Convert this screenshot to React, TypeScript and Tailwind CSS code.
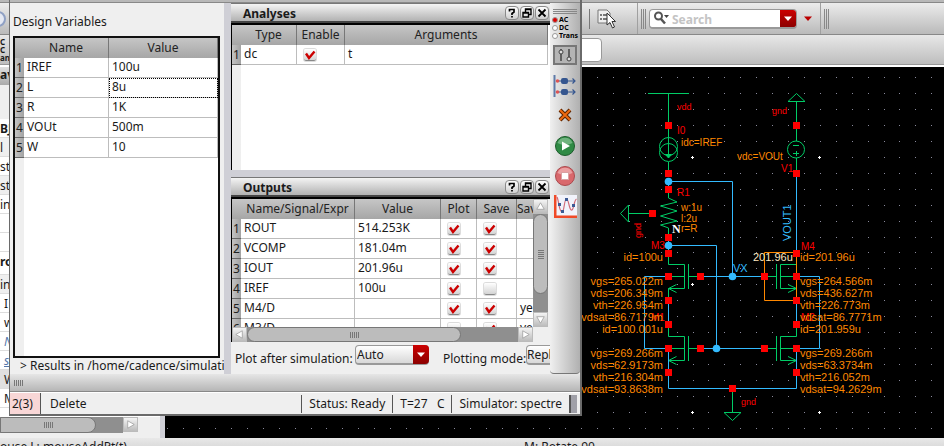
import React from "react";

const UI = "font-['Noto_Sans','Open_Sans',sans-serif]";

function Tick({ on, label }: { on: boolean; label: string }) {
  return (
    <span className="inline-grid h-3 w-3 align-middle">
      <input
        type="checkbox"
        defaultChecked={on}
        aria-label={label}
        className="peer col-start-1 row-start-1 h-3 w-3 appearance-none rounded-xs border-b border-[#888888] bg-linear-to-b from-white to-[#d4d4d4] shadow-[0_0_0_1px_#dcdcdc]"
      />
      <svg viewBox="0 0 12 12" className="pointer-events-none col-start-1 row-start-1 hidden h-3 w-3 peer-checked:block">
        <path d="M2 4.5 L5 9 L10.5 2.5" fill="none" stroke="#cc0000" strokeWidth="2.4" />
      </svg>
    </span>
  );
}

function Grip({ vertical = false }: { vertical?: boolean }) {
  return vertical ? (
    <span className="flex flex-col gap-px">
      {[0, 1, 2, 3, 4].map((i) => (
        <i key={i} className="h-px w-1.5 bg-[#777777]" />
      ))}
    </span>
  ) : (
    <span className="flex gap-px">
      {[0, 1, 2, 3, 4].map((i) => (
        <i key={i} className="h-1.5 w-px bg-[#777777]" />
      ))}
    </span>
  );
}

const headCell =
  "h-[19px] border-r border-[#777777] bg-linear-to-b from-[#c6c6c6] to-[#a6a6a6] p-0 text-center font-normal leading-5 text-[#222222] overflow-hidden whitespace-nowrap";
const rowHead =
  "h-5 border-b border-[#666666] bg-linear-to-r from-[#c4c4c4] to-[#a2a2a2] p-0 text-center font-normal leading-[18px] text-[#222222]";
const cell = "h-5 border-r border-b border-[#bdbdbd] bg-white p-0 pl-[3px] align-top leading-[18px] whitespace-nowrap overflow-hidden";

function DesignVariables() {
  const rows = [
    ["IREF", "100u"],
    ["L", "8u"],
    ["R", "1K"],
    ["VOUt", "500m"],
    ["W", "10"],
  ];
  return (
    <section className="flex w-[214px] flex-none flex-col bg-[#efefef]">
      <h2 className="h-[33px] flex-none pt-[9px] pl-[3px] leading-5">Design Variables</h2>
      <div className="mr-1 ml-[3px] min-h-0 flex-1 border-2 border-[#111111] bg-linear-to-r from-[#efefef] from-[9px] to-white to-[9px]">
        <table className="w-full table-fixed border-separate border-spacing-0">
          <colgroup>
            <col className="w-[9px]" />
            <col className="w-[85px]" />
            <col />
          </colgroup>
          <thead>
            <tr>
              <th className={headCell + " border-r-0"} />
              <th className={headCell}>Name</th>
              <th className={headCell}>Value</th>
            </tr>
          </thead>
          <tbody>
            {rows.map(([n, v], i) => (
              <tr key={n}>
                <th className={rowHead}>{i + 1}</th>
                <td className={cell}>{n}</td>
                <td className={cell + (n === "L" ? " outline-1 -outline-offset-1 outline-dotted outline-black" : "")}>{v}</td>
              </tr>
            ))}
          </tbody>
        </table>
      </div>
      <p className="flex-none overflow-hidden pl-2.5 leading-4 whitespace-nowrap">&gt; Results in /home/cadence/simulation</p>
    </section>
  );
}

function TitleButton({ name, children }: { name: string; children: React.ReactNode }) {
  return (
    <button aria-label={name} className="h-[14px] w-[14px] rounded-sm border border-[#8a8a8a] bg-linear-to-b from-white to-[#cfcfcf]">
      <svg viewBox="0 0 12 12" className="h-3 w-3" fill="none" stroke="#000000">
        {children}
      </svg>
    </button>
  );
}

function PanelTitle({ children }: { children: React.ReactNode }) {
  return (
    <header className="flex h-5 flex-none items-center gap-px border-t border-b-2 border-t-[#777777] border-b-[#444444] bg-linear-to-b from-[#f4f4f4] to-[#b2b2b2] pr-px pl-3">
      <h2 className="flex-1 pt-0.5 font-bold">{children}</h2>
      <TitleButton name="Help">
        <path d="M3.5 4.5 V2.5 H8 V5 L6 6.5 V8 M6 9 V10.5" strokeWidth="1.7" />
      </TitleButton>
      <TitleButton name="Float">
        <path d="M4.5 5 V2 H10 V7.5 H8 M4 2.5 H10.5" strokeWidth="1.4" />
        <path d="M2 5.5 H7.5 V10 H2 Z M2 6 H8" strokeWidth="1.4" />
      </TitleButton>
      <TitleButton name="Close">
        <path d="M2.5 2.5 L9.5 9.5 M9.5 2.5 L2.5 9.5" strokeWidth="1.8" />
      </TitleButton>
    </header>
  );
}

function Analyses() {
  return (
    <section className="flex h-[167px] flex-none flex-col">
      <PanelTitle>Analyses</PanelTitle>
      <div className="flex-1 border-t-2 border-l border-black bg-linear-to-r from-[#efefef] from-[9px] to-white to-[9px] pr-0.5">
        <table className="w-full table-fixed border-separate border-spacing-0">
          <colgroup>
            <col className="w-[9px]" />
            <col className="w-14" />
            <col className="w-12" />
            <col />
          </colgroup>
          <thead>
            <tr>
              <th className={headCell + " border-r-0"} />
              <th className={headCell}>Type</th>
              <th className={headCell}>Enable</th>
              <th className={headCell}>Arguments</th>
            </tr>
          </thead>
          <tbody>
            <tr>
              <th className={rowHead}>1</th>
              <td className={cell}>dc</td>
              <td className={cell + " pl-[7px]"}>
                <Tick on label="Enable dc" />
              </td>
              <td className={cell}>t</td>
            </tr>
          </tbody>
        </table>
      </div>
    </section>
  );
}

function ScrollButton({ dir }: { dir: "up" | "down" | "left" | "right" }) {
  const d = { up: "M3 10 L7 3 L11 10 Z", down: "M3 4 L7 11 L11 4 Z", left: "M10 3 L3 7 L10 11 Z", right: "M4 3 L11 7 L4 11 Z" }[dir];
  return (
    <button aria-label={"Scroll " + dir} className="h-[15px] w-[15px] flex-none border border-[#bbbbbb] bg-linear-to-b from-[#f4f4f4] to-[#bcbcbc]">
      <svg viewBox="0 0 14 14" className="h-[13px] w-[13px]">
        <path d={d} fill="#ffffff" stroke="#999999" strokeWidth="0.8" />
      </svg>
    </button>
  );
}

function Outputs() {
  const rows: [string, string, boolean, boolean, string][] = [
    ["ROUT", "514.253K", true, true, ""],
    ["VCOMP", "181.04m", true, true, ""],
    ["IOUT", "201.96u", true, true, ""],
    ["IREF", "100u", true, false, ""],
    ["M4/D", "", true, true, "yes"],
    ["M3/D", "", false, true, "yes"],
  ];
  return (
    <section className="flex min-h-0 flex-1 flex-col">
      <PanelTitle>Outputs</PanelTitle>
      <div className="flex h-[130px] flex-none border-t-2 border-l border-black pr-0.5">
        <div className="min-w-0 flex-1 overflow-hidden bg-white">
          <table className="w-[360px] table-fixed border-separate border-spacing-0">
            <colgroup>
              <col className="w-[9px]" />
              <col className="w-[114px]" />
              <col className="w-[86px]" />
              <col className="w-9" />
              <col className="w-10" />
              <col />
            </colgroup>
            <thead>
              <tr>
                <th className={headCell + " border-r-0"} />
                <th className={headCell}>Name/Signal/Expr</th>
                <th className={headCell}>Value</th>
                <th className={headCell}>Plot</th>
                <th className={headCell}>Save</th>
                <th className={headCell + " text-left"}>Save Options</th>
              </tr>
            </thead>
            <tbody>
              {rows.map(([n, v, p, s, o], i) => (
                <tr key={n}>
                  <th className={rowHead}>{i + 1}</th>
                  <td className={cell}>{n}</td>
                  <td className={cell}>{v}</td>
                  <td className={cell + " pl-[7px]"}>
                    <Tick on={p} label={"Plot " + n} />
                  </td>
                  <td className={cell + " pl-[7px]"}>
                    <Tick on={s} label={"Save " + n} />
                  </td>
                  <td className={cell}>{o}</td>
                </tr>
              ))}
            </tbody>
          </table>
        </div>
        <div className="flex w-[15px] flex-none flex-col bg-[#8f8f8f]">
          <ScrollButton dir="up" />
          <div className="flex h-20 items-center justify-center rounded-full border border-[#777777] bg-[#bcbcbc]">
            <Grip vertical />
          </div>
          <span className="flex-1" />
          <ScrollButton dir="down" />
        </div>
      </div>
      <div className="flex flex-none border-l border-black pr-[17px]">
        <ScrollButton dir="left" />
        <div className="flex flex-1 bg-[#8f8f8f]">
          <div className="flex h-[15px] w-[214px] items-center justify-center rounded-full border border-[#777777] bg-[#bcbcbc]">
            <Grip />
          </div>
        </div>
        <ScrollButton dir="right" />
      </div>
      <div className="flex items-start overflow-hidden pt-[3px] pl-1 whitespace-nowrap">
        <label htmlFor="plot-after" className="w-[120px] flex-none pt-1 leading-5">
          Plot after simulation:
        </label>
        <span className="grid w-[74px] flex-none">
          <select
            id="plot-after"
            className="col-start-1 row-start-1 h-5 appearance-none rounded-sm border border-b-2 border-[#999999] bg-linear-to-b from-white to-[#d8d8d8] pl-px leading-4"
          >
            <option>Auto</option>
          </select>
          <span className="pointer-events-none col-start-1 row-start-1 flex h-[19px] w-4 items-center justify-center justify-self-end rounded-r-sm bg-linear-to-b from-[#cc0000] to-[#8c0000]">
            <svg viewBox="0 0 8 5" className="h-[5px] w-2">
              <path d="M0 0.5 H8 L4 5 Z" fill="#ffffff" />
            </svg>
          </span>
        </span>
        <label htmlFor="plot-mode" className="ml-3.5 w-[83px] flex-none pt-1 leading-5">
          Plotting mode:
        </label>
        <select
          id="plot-mode"
          className="h-5 w-[74px] flex-none appearance-none rounded-sm border border-b-2 border-[#999999] bg-linear-to-b from-white to-[#d8d8d8] pl-0 leading-4"
        >
          <option>Replace</option>
        </select>
      </div>
    </section>
  );
}

function RadioLine({ on, text }: { on: boolean; text: string }) {
  return (
    <label className="flex h-2 items-center gap-px text-[7px] leading-2 font-bold text-black">
      <input
        type="radio"
        name="kind"
        defaultChecked={on}
        className="h-1.5 w-1.5 flex-none appearance-none rounded-full border border-[#999999] bg-white checked:bg-[#dd0000]"
      />
      {text}
    </label>
  );
}

function SideTools() {
  return (
    <aside className="flex w-[30px] flex-none flex-col items-center rounded-b-sm border-b border-[#777777] bg-linear-to-r from-[#f0f0f0] to-[#b0b0b0] pt-1.5">
      <span className="flex w-6 flex-col gap-px">
        <i className="h-px bg-[#888888]" />
        <i className="h-px bg-[#888888]" />
        <i className="h-px bg-[#888888]" />
      </span>
      <fieldset aria-label="Analysis kind" className="mt-0.5 flex w-[22px] flex-col">
        <RadioLine on text="AC" />
        <RadioLine on={false} text="DC" />
        <RadioLine on={false} text="Trans" />
      </fieldset>
      <button aria-label="Edit variables" className="mt-[5px] h-5 w-6 border-2 border-[#777777] bg-[#b4b4b4]">
        <svg viewBox="0 0 20 16" className="h-4 w-5" fill="none">
          <path d="M6 2 V14 M14 2 V14" stroke="#444444" strokeWidth="1.5" />
          <circle cx="6" cy="5" r="2" fill="#dddddd" stroke="#444444" />
          <circle cx="14" cy="12" r="2" fill="#dddddd" stroke="#444444" />
        </svg>
      </button>
      <button aria-label="Setup outputs" className="mt-[9px]">
        <svg viewBox="0 0 24 24" className="h-6 w-6" fill="none">
          <path d="M1.5 1 V23" stroke="#5f7aa8" strokeWidth="2" />
          <path d="M3 7 H22 M3 18 H22 M19.5 4.5 L22 7 L19.5 9.5 M19.5 15.5 L22 18 L19.5 20.5" stroke="#35568f" strokeWidth="1.2" />
          <circle cx="4.5" cy="7" r="1.8" fill="#dd5555" />
          <circle cx="4.5" cy="18" r="1.8" fill="#dd5555" />
          <rect x="8" y="4" width="7" height="6" rx="2" fill="#35568f" />
          <rect x="8" y="15" width="7" height="6" rx="2" fill="#35568f" />
        </svg>
      </button>
      <button aria-label="Delete" className="mt-2.5">
        <svg viewBox="0 0 14 14" className="h-3.5 w-3.5">
          <path d="M2 2 L12 12 M12 2 L2 12" stroke="#5a2400" strokeWidth="4" />
          <path d="M2 2 L12 12 M12 2 L2 12" stroke="#ee6a10" strokeWidth="2" />
        </svg>
      </button>
      <button aria-label="Run" className="mt-3.5">
        <svg viewBox="0 0 20 20" className="h-5 w-5">
          <circle cx="10" cy="10" r="9.5" fill="#2f8a45" stroke="#1d5c2c" />
          <path d="M2.5 7 A8 8 0 0 1 17.5 7 Q10 11 2.5 7 Z" fill="#6fb37e" />
          <path d="M7 5.5 L15 10 L7 14.5 Z" fill="#ffffff" />
        </svg>
      </button>
      <button aria-label="Stop" className="mt-2.5">
        <svg viewBox="0 0 20 20" className="h-5 w-5">
          <circle cx="10" cy="10" r="9.5" fill="#d9686c" stroke="#aa4a4e" />
          <path d="M2.5 7 A8 8 0 0 1 17.5 7 Q10 11 2.5 7 Z" fill="#eaa0a2" />
          <rect x="6.5" y="6.5" width="7" height="7" fill="#ffffff" stroke="#d9a0a2" />
        </svg>
      </button>
      <button aria-label="Plot" className="mt-[9px]">
        <svg viewBox="0 0 23 23" className="h-[23px] w-[23px]" fill="none">
          <rect width="23" height="23" fill="#f1f3fb" />
          <path d="M1 0 V22 H23" stroke="#f04a28" strokeWidth="3" />
          <path d="M3 2 C5 6 5 17 8 17 C10.5 17 10 4 12.5 4 C15 4 15 16 18 15 C20 14 20 5 22.5 4" stroke="#d06a78" strokeWidth="1.2" />
          <path d="M4 8 h3 v3 h-3 Z M7 15 h3 v3 h-3 Z M11 3 h3 v3 h-3 Z M18 9 h3 v3 h-3 Z" fill="#3d5a94" />
        </svg>
      </button>
    </aside>
  );
}

function Dialog() {
  return (
    <div className="absolute top-0 left-[9px] flex h-[416px] w-[573px] flex-col border-r-2 border-b-2 border-l border-[#6a6a6a] bg-[#efefef]">
      <div className="h-[3px] flex-none border-b border-[#888888] bg-[#b8b8b8]" />
      <div className="flex min-h-0 flex-1">
        <DesignVariables />
        <div className="w-[7px] flex-none bg-[#cfcfd6]" />
        <div className="flex min-w-0 flex-1 flex-col">
          <Analyses />
          <div className="h-[7px] flex-none bg-[#cfcfd6]" />
          <Outputs />
        </div>
        <SideTools />
      </div>
      <div className="flex h-[18px] flex-none items-center border-b border-[#888888] bg-linear-to-b from-[#e6e6e6] to-[#b6b6b6] pl-1">
        <Grip />
      </div>
      <footer className="flex h-[22px] flex-none items-center border-t border-white leading-[18px] whitespace-pre">
        <span className="flex h-full w-[31px] items-center border-r border-[#555555] bg-[#f8d6d6] pl-0.5">2(3)</span>
        <span className="flex-1 pl-[9px]">Delete</span>
        <span className="border-l border-[#555555] px-[7px]">Status: Ready</span>
        <span className="border-l border-[#555555] px-[7px]">{"T=27   C"}</span>
        <span className="border-l border-[#555555] px-[7px]">Simulator: spectre</span>
        <span className="mr-[3px] h-[18px] w-2 border-l-2 border-[#555555] bg-[#a0a0a8]" />
      </footer>
    </div>
  );
}

const GREEN = "#00cc66";
const BLUE = "#33bbff";
const ORANGE = "#ff8800";
const RED = "#ff0000";

function Schematic() {
  const dots: React.ReactNode[] = [];
  for (let r = 0; r < 23; r++)
    for (let c = 0; c < 70; c++)
      dots.push(<rect key={r + "-" + c} x={Math.round(167.3 + c * 15.917)} y={Math.round(77 + r * 15.95)} width="1" height="1" />);
  const pins = [
    [668, 125], [668, 173], [668, 189], [652, 213], [668, 237], [668, 253], [668, 276], [700, 276], [668, 300], [668, 324],
    [668, 348], [700, 348], [668, 372], [732, 388], [796, 125], [796, 173], [796, 253], [796, 276], [764, 276], [796, 300],
    [796, 324], [796, 348], [764, 348], [796, 372],
  ];
  const left: [string, number][] = [
    ["id=100u", 261], ["vgs=265.022m", 285], ["vds=206.349m", 297], ["vth=226.954m", 309], ["vdsat=86.7179m", 321],
    ["id=100.001u", 333], ["vgs=269.266m", 357], ["vds=62.9173m", 369], ["vth=216.304m", 381], ["vdsat=93.8638m", 393],
  ];
  const right: [string, number][] = [
    ["id=201.96u", 261], ["vgs=264.566m", 285], ["vds=436.627m", 297], ["vth=226.773m", 309], ["vdsat=86.7771m", 321],
    ["id=201.959u", 333], ["vgs=269.266m", 357], ["vds=63.3734m", 369], ["vth=216.052m", 381], ["vdsat=94.2629m", 393],
  ];
  return (
    <svg className="block h-full w-full bg-black font-['Liberation_Sans',sans-serif] text-[11px]" aria-label="Schematic">
      <g transform="translate(-165 -67)">
        <g fill="#8a8a9c">{dots}</g>
        <g fill="none" stroke={GREEN}>
          <path d="M648 93.5 H689 M668.5 93 V158 M668.5 162 V173" />
          <circle cx="668.5" cy="146.5" r="9" />
          <circle cx="668.5" cy="152.5" r="9" />
          <path d="M665.5 154.5 H671.5 L668.5 158 Z" fill={GREEN} />
          <path d="M668.5 189 V198 L677 202 L660.5 206 L677 211 L660.5 216 L677 221 L660.5 225 L668.5 228 V240" />
          <path d="M652 213.5 H628.5 M620.5 213.5 L628.5 205 V222 Z" />
          <path d="M668.5 253 V264.5 H684.5 V288.5 H668.5 V300 M688.5 264 V289 M668 276.5 H684 M688 276.5 H700 M676.5 284.5 L668.5 288.5 L676.5 292.5" />
          <path d="M668.5 325 V336.5 H684.5 V360.5 H668.5 M688.5 336 V361 M668 348.5 H684 M688 348.5 H700 M676.5 356.5 L668.5 360.5 L676.5 364.5" />
          <path d="M732.5 390 V412 M724 412.5 H741 L732.5 420.5 Z" />
          <path d="M788 101.5 H805 L796.5 93.5 Z M796.5 101 V141 M796.5 158 V173" />
          <circle cx="796" cy="149.5" r="8.5" />
          <path d="M793 145.5 H799 M793 153.5 H799 M796.5 151 V156" />
          <path d="M796.5 253 V264.5 H780.5 V288.5 H796.5 V300 M776.5 264 V289 M780 276.5 H796 M764 276.5 H776 M788 284.5 L796.5 288.5 L788 292.5" />
          <path d="M796.5 325 V336.5 H780.5 V360.5 H796.5 M776.5 336 V361 M780 348.5 H796 M764 348.5 H776 M788 356.5 L796.5 360.5 L788 364.5" />
        </g>
        <g fill="none" stroke={BLUE}>
          <path d="M668.5 181.5 H732.5 V276 M668.5 245.5 H716.5 V348 M668.5 178 V190 M668.5 238 V252" />
          <path d="M668 276.5 H644.5 V348.5 H668 M668.5 302 V324 M668.5 348 V388.5 H796.5 V348 M700 276.5 H764 M700 348.5 H764" />
          <path d="M796.5 174 V250 M796.5 302 V324 M797 276.5 H819.5 V348.5 H797" />
        </g>
        <path d="M764.5 252.5 H796.5 V300.5 H764.5 Z" fill="none" stroke={ORANGE} />
        <g fill={RED}>
          {pins.map(([x, y]) => (
            <rect key={x + "," + y} x={x - 3} y={y - 3} width="7" height="7" />
          ))}
        </g>
        <g fill={BLUE}>
          <circle cx="668.5" cy="181.5" r="3.8" />
          <circle cx="668.5" cy="245.5" r="3.8" />
          <circle cx="732.5" cy="276.5" r="3.8" />
          <circle cx="716.5" cy="348.5" r="3.8" />
          <text x="733" y="272">VX</text>
          <text transform="translate(791 241) rotate(-90)">VOUT1</text>
        </g>
        <g fill={RED} fontSize="9">
          <text x="677" y="110">vdd</text>
          <text x="772" y="114">gnd</text>
          <text x="741" y="405">gnd</text>
          <text transform="translate(641 238) rotate(-90)">gnd</text>
        </g>
        <g fill={RED} fontSize="10">
          <text x="677" y="134">I0</text>
          <text x="677" y="196">R1</text>
          <text x="651" y="249">M3</text>
          <text x="651" y="321">M1</text>
          <text x="781" y="172">V1</text>
          <text x="801" y="250">M4</text>
          <text x="801" y="321">M2</text>
        </g>
        <g fill={ORANGE} fontSize="10">
          <text x="681" y="146">idc=IREF</text>
          <text x="737" y="160">vdc=VOUt</text>
          <text x="681" y="211">w:1u</text>
          <text x="681" y="222">l:2u</text>
          <text x="681" y="232">r=R</text>
        </g>
        <g fill={ORANGE}>
          {left.map(([t, y]) => (
            <text key={y} x="663" y={y} textAnchor="end">{t}</text>
          ))}
          {right.map(([t, y]) => (
            <text key={y} x="800" y={y}>{t}</text>
          ))}
        </g>
        <text x="753" y="261" fill="#ffe8c0">201.96u</text>
        <text x="672" y="233" fill="#ffffff" className="font-['Liberation_Serif',serif] text-xs font-bold">N</text>
        <path d="M691 157.5 h3 M692.5 156 v3 M691 284.5 h3 M692.5 283 v3 M691 412.5 h3 M692.5 411 v3 M818 157.5 h3 M819.5 156 v3 M818 412.5 h3 M819.5 411 v3" stroke="#ffffff" />
      </g>
    </svg>
  );
}

function TopBars() {
  return (
    <div className="flex-none">
      <div className="h-[3px] border-b border-[#888888] bg-[#b8b8b8]" />
      <div className="flex h-8 items-stretch border-b border-[#888888] bg-linear-to-b from-[#ececec] to-[#bababa]">
        <div className="flex w-[638px] flex-none items-center border-r border-[#a0a0a0]">
          <span className="h-4 w-4 flex-none -translate-x-2.5 rounded-full border-2 border-[#8fa0c4] bg-[#e4e8f2]" />
          <span className="flex-1" />
          <i className="mr-[7px] h-5 w-px bg-[#777777]" />
          <button aria-label="Select objects" className="mr-5">
            <svg viewBox="0 0 20 20" className="h-5 w-5">
              <path d="M1 1 H10 L13 4 V14 H1 Z" fill="#eeeeee" stroke="#777777" />
              <path d="M3 5 h2 v2 h-2 Z M3 9 h2 v2 h-2 Z M6 5 h5 v2 h-5 Z M6 9 h4 v2 h-4 Z" fill="#777777" />
              <path d="M10 4 V16 L13 13.5 L15.5 19 L17.5 18 L15 12.5 H18.5 Z" fill="#ffffff" stroke="#333333" />
            </svg>
          </button>
        </div>
        <div className="flex w-[183px] flex-none items-center border-r border-[#a0a0a0] pl-[3px]">
          <span className="mr-[3px] flex w-[5px] gap-px">
            <i className="h-5 w-px bg-[#888888]" />
            <i className="h-5 w-px bg-[#888888]" />
            <i className="h-5 w-px bg-[#888888]" />
          </span>
          <form className="flex h-5 w-[148px] items-center overflow-hidden rounded-sm border border-b-2 border-[#999999] bg-white">
            <svg viewBox="0 0 17 14" className="ml-[3px] h-3.5 w-[17px] flex-none" fill="none">
              <circle cx="5.5" cy="5" r="3.5" stroke="#555555" strokeWidth="2" />
              <path d="M8 8 L12 12.5" stroke="#555555" strokeWidth="2.5" />
              <path d="M11 4 H16 L13.5 7 Z" fill="#444444" />
            </svg>
            <input aria-label="Search" placeholder="Search" className="h-[18px] min-w-0 flex-1 pt-0.5 pl-0.5 font-bold placeholder:text-[#c4c4c4]" />
            <button aria-label="Search history" className="flex h-full w-4 flex-none items-center justify-center bg-linear-to-b from-[#cc0000] to-[#8c0000]">
              <svg viewBox="0 0 8 5" className="h-[5px] w-2">
                <path d="M0 0.5 H8 L4 5 Z" fill="#ffffff" />
              </svg>
            </button>
          </form>
          <svg viewBox="0 0 8 5" className="ml-[7px] h-[5px] w-2">
            <path d="M0 0.5 H8 L4 5 Z" fill="#bb0000" />
          </svg>
        </div>
        <div className="flex flex-1 items-center gap-px pl-[3px]">
          <i className="h-5 w-px bg-[#888888]" />
          <i className="h-5 w-px bg-[#888888]" />
          <i className="h-5 w-px bg-[#888888]" />
        </div>
      </div>
      <div className="flex h-8 items-center border-b-2 border-white bg-linear-to-b from-[#e8e8e8] to-[#bcbcbc] shadow-[inset_0_-1px_0_#999999]">
        <div className="w-3 text-[8px] leading-2 font-bold">
          C<br />C<br />ans
        </div>
        <input aria-label="Filter" className="h-6 w-[590px] rounded-sm border border-[#999999] bg-white" />
      </div>
    </div>
  );
}

function Browser() {
  const rows: [string, string][] = [
    ["BJ", "h-[19px] font-bold"],
    ["l", "h-[19px] bg-[#efefef]"],
    ["st", "h-[19px]"],
    ["st", "h-[19px] bg-[#efefef]"],
    ["in", "h-[19px]"],
    ["", "h-[19px]"],
    ["", "h-[19px]"],
    ["ro", "h-[23px] font-bold"],
    ["in", "h-[19px] bg-[#efefef]"],
    ["I", "h-[19px] pl-1"],
    ["w", "h-[19px] pl-1"],
    ["N", "h-[19px] pl-1 italic text-[#5577aa]"],
    ["s", "h-[19px] pl-1 italic underline text-[#5577aa]"],
    ["W", "h-[19px] pl-1 bg-[#e0e0e0]"],
    ["M", "h-[19px] pl-1"],
  ];
  return (
    <aside className="flex w-[165px] flex-none flex-col border-r-[5px] border-[#cfcfd6] bg-[#efefef]">
      <h3 className="h-[18px] flex-none bg-linear-to-b from-[#e0e0e0] to-[#aaaaaa] leading-4 font-bold">av</h3>
      <ul className="mt-[34px] min-h-0 flex-1 overflow-hidden bg-white">
        {rows.map(([t, c], i) => (
          <li key={i} className={"border-b border-[#dddddd] leading-5 " + c}>
            {t}
          </li>
        ))}
      </ul>
      <div className="mb-[5px] flex h-4 w-[138px] flex-none">
        <div className="flex flex-1 bg-[#8f8f8f]">
          <div className="flex w-24 items-center justify-center rounded-r-full border border-[#777777] bg-[#bcbcbc]">
            <Grip />
          </div>
        </div>
        <ScrollButton dir="right" />
      </div>
    </aside>
  );
}

export default function App() {
  return (
    <main className={"relative flex h-screen w-full flex-col overflow-hidden bg-[#d8d8d8] text-xs text-[#1a1a1a] " + UI}>
      <TopBars />
      <div className="flex min-h-0 flex-1">
        <Browser />
        <div className="min-w-0 flex-1">
          <Schematic />
        </div>
      </div>
      <footer className="flex h-2 flex-none overflow-hidden bg-linear-to-b from-[#e8e8e8] to-[#dcdcdc] leading-[18px] whitespace-nowrap">
        <span className="w-[524px] flex-none">ouse L: mouseAddPt(t)</span>
        <span>M: Rotate 90</span>
      </footer>
      <Dialog />
    </main>
  );
}
